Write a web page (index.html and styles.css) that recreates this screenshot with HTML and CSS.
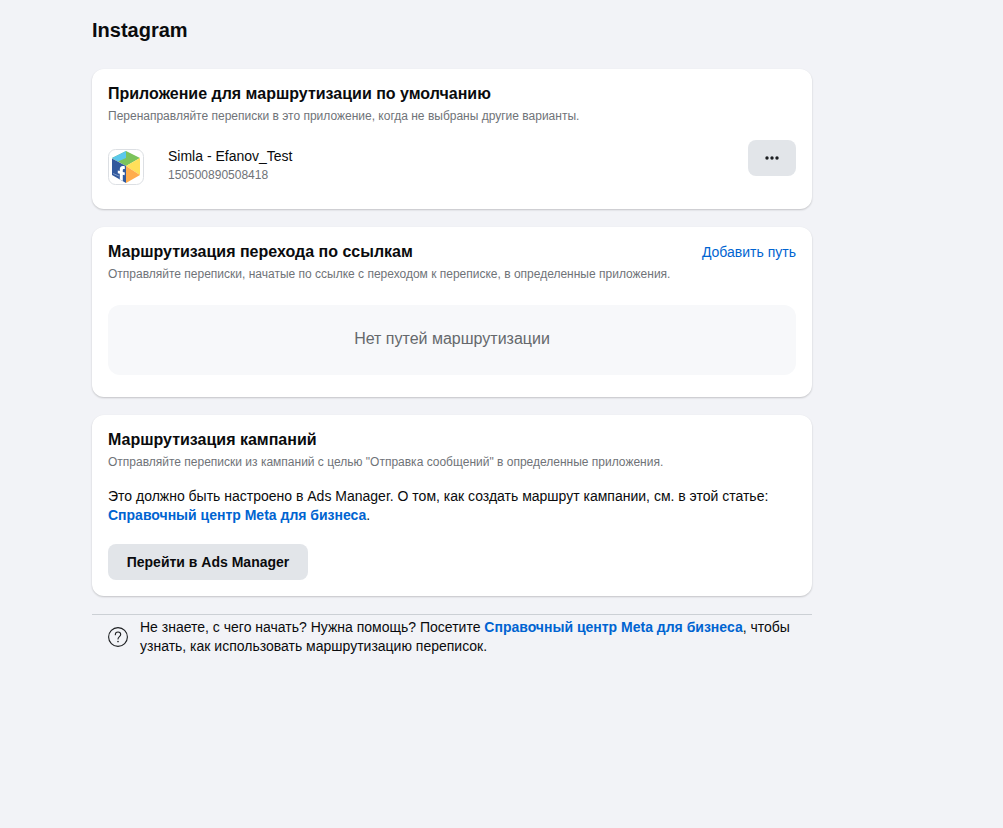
FILE: index.html
```html
<!DOCTYPE html>
<html lang="ru">
<head>
  <meta charset="UTF-8" />
  <title>Instagram</title>
  <link rel="stylesheet" href="styles.css">
</head>
<body>
  <main class="page">
    <h1>Instagram</h1>

    <section class="card">
      <h2>Приложение для маршрутизации по умолчанию</h2>
      <p class="hint">Перенаправляйте переписки в это приложение, когда не выбраны другие варианты.</p>
      <div class="app">
        <svg class="app-icon" viewBox="0 0 36 36" aria-hidden="true">
          <rect x=".5" y=".5" width="35" height="35" rx="7" fill="#fff" stroke="#dcdfe3"/>
          <path d="M18 2 32 9 18 17 4 9z" fill="#7cc35b"/>
          <path d="M18 2v7L10 12.500 4 9z" fill="#5bc8ec"/>
          <path d="M4 9.500l14 7.500v17L4 26z" fill="#31599d"/>
          <path d="M32 9v17l-14-9z" fill="#ffe05a"/>
          <path d="M18 17l14 9-14 8z" fill="#ffad4d"/>
          <path d="M5 24.500l6 2.500" stroke="#7f9bc8" stroke-width="1"/>
          <path d="M16.800 17.200c-3.600-1-5 .4-5 3.300v1.500l-2-.5v2.700l2 .6v5.700l3 1.500v-6.300l1.800.5.3-2.700-2.100-.5v-1.500c0-1.300.6-1.700 2-1.400z" fill="#fff"/>
        </svg>
        <div class="app-info">
          <div class="app-name">Simla - Efanov_Test</div>
          <div class="app-id">150500890508418</div>
        </div>
        <button class="btn btn-more" type="button" aria-label="Ещё">
          <svg width="16" height="16" viewBox="0 0 16 16" fill="#1c1e21" aria-hidden="true">
            <circle cx="3" cy="8" r="1.7"/>
            <circle cx="8" cy="8" r="1.7"/>
            <circle cx="13" cy="8" r="1.7"/>
          </svg>
        </button>
      </div>
    </section>

    <section class="card">
      <div class="card-head">
        <h2>Маршрутизация перехода по ссылкам</h2>
        <a href="#">Добавить путь</a>
      </div>
      <p class="hint">Отправляйте переписки, начатые по ссылке с переходом к переписке, в определенные приложения.</p>
      <div class="empty">Нет путей маршрутизации</div>
    </section>

    <section class="card">
      <h2>Маршрутизация кампаний</h2>
      <p class="hint">Отправляйте переписки из кампаний с целью "Отправка сообщений" в определенные приложения.</p>
      <p class="text">Это должно быть настроено в Ads Manager. О том, как создать маршрут кампании, см. в этой статье: <a class="help" href="#">Справочный центр Meta для бизнеса</a>.</p>
      <button class="btn btn-ads" type="button">Перейти в Ads Manager</button>
    </section>

    <footer class="footer">
      <svg class="footer-icon" viewBox="0 0 20 20" fill="none" stroke="#1c1e21" aria-hidden="true">
        <circle cx="10" cy="10" r="9.400" stroke-width="1.100"/>
        <path d="M7.300 7.800c0-1.700 1.100-2.800 2.700-2.800s2.700 1 2.700 2.500c0 2-2.700 2.200-2.700 4.500" stroke-width="1.100" stroke-linecap="round"/>
        <circle cx="10" cy="14.600" r=".8" fill="#1c1e21" stroke="none"/>
      </svg>
      <p>Не знаете, с чего начать? Нужна помощь? Посетите <a class="help" href="#">Справочный центр Meta для бизнеса</a>, чтобы узнать, как использовать маршрутизацию переписок.</p>
    </footer>
  </main>
</body>
</html>
```
FILE: styles.css
```css
body {margin: 0; background: #f2f3f7; color: #0a0b0d; font: 14px/19px "Liberation Sans", Arial, Helvetica, sans-serif;}
h1, h2, p {margin: 0;}
a {color: #0064d1; text-decoration: none;}

.page {max-width: 720px; padding: 18px 92px;}
h1 {font-size: 20px; line-height: 24px; margin-bottom: 27px;}
h2 {font-size: 16px; line-height: 20px;}

.card {background: #fff; border-radius: 12px; padding: 15px 16px 16px; margin-bottom: 18px; box-shadow: 0 1px 2px rgba(0, 0, 0, .2);}
.card-head {display: flex; justify-content: space-between; align-items: center;}
.hint {font-size: 12px; line-height: 16px; margin-top: 4px; color: #6f7378;}

.app {display: flex; align-items: flex-start; margin-top: 16px; padding-bottom: 8px;}
.app-icon {width: 36px; height: 36px; margin: 9px 24px 0 0;}
.app-info {flex: 1; padding-top: 7px;}
.app-id {font-size: 12px; line-height: 19px; color: #6f7378;}

.btn {height: 36px; border: 0; border-radius: 8px; background: #e2e5e9; color: #0a0b0d; font: bold 14px/19px "Liberation Sans", Arial, Helvetica, sans-serif; cursor: pointer;}
.btn-more {display: flex; align-items: center; justify-content: center; width: 48px; padding: 0;}
.btn-ads {display: block; min-width: 200px; padding: 0 16px;}

.empty {margin: 23px 0 6px; padding: 23px 24px 25px; border-radius: 12px; background: #f7f8fa; color: #65686c; font-size: 16px; line-height: 22px; text-align: center;}
.text {margin: 17px 0 19px;}
.help {font-weight: bold;}

.footer {display: flex; align-items: center; gap: 12px; padding: 3px 16px; border-top: 1px solid #ccd0d5;}
.footer-icon {flex: none; width: 20px; height: 20px;}
```
